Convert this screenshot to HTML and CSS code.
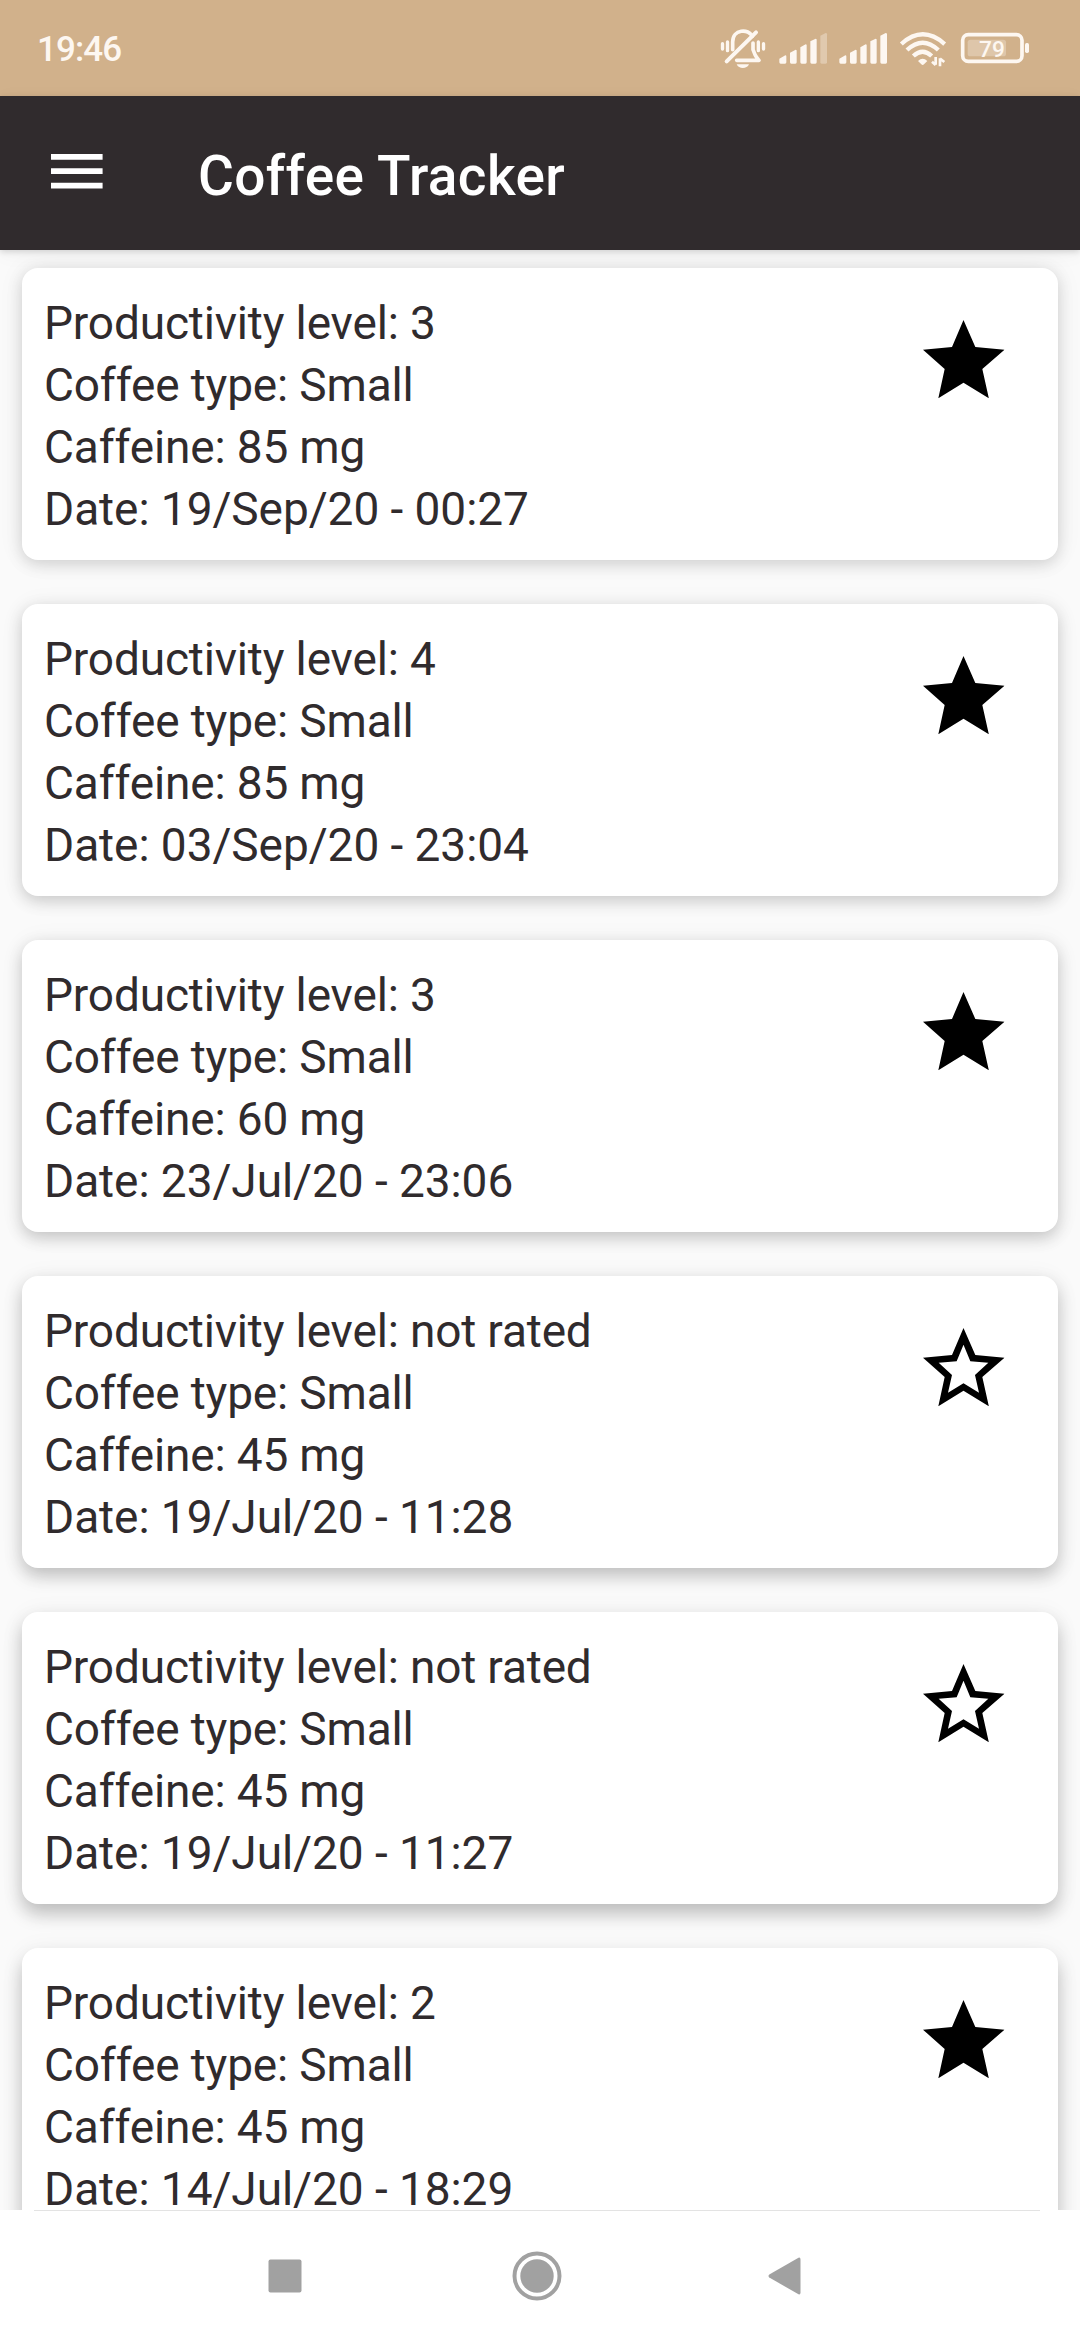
FILE: index.html
```html
<!DOCTYPE html>
<html lang="en">
<head>
<meta charset="utf-8">
<title>Coffee Tracker</title>
<link rel="stylesheet" href="styles.css">
</head>
<body>
<svg class="defs" width="0" height="0" aria-hidden="true">
  <symbol id="star-full" viewBox="0 0 245 235">
    <path d="M121.500 0L157 81L244.500 89L178 147L197.500 235L121.500 188.500L46 235L65 147L0 89L87 81Z"/>
  </symbol>
  <symbol id="star-empty" viewBox="0 0 245 235">
    <path fill-rule="evenodd" d="M121.500 0L157 81L244.500 89L178 147L197.500 235L121.500 188.500L46 235L65 147L0 89L87 81ZM121.500 50L101 100L47 104L87 141L75 194L121.500 166L168 194L156 141L196 104L142 100Z"/>
  </symbol>
</svg>
<div class="screen">
  <header class="status">
    <span class="time">19:46</span>
    <div class="status-icons">
      <svg class="bell" viewBox="60 56 140 122" fill="none" stroke="currentColor" stroke-width="10" stroke-linecap="round" stroke-linejoin="round">
        <path d="M98 118V95C98 56 146 54 157 78" stroke-width="11"/>
        <path d="M80 153L168 66" stroke-width="12"/>
        <path d="M159 98V118L165 133C167 139 173 145 177 150H110" stroke-width="11"/>
        <path d="M67.500 100V116M82.500 95V121M175 95V121M190.500 100V116"/>
        <path d="M110 162H147C141 177 116 177 110 162Z" fill="currentColor" stroke="none"/>
      </svg>
      <svg class="signal" viewBox="237 67 146 96" fill="currentColor">
        <path d="M238 147L256 137Q259 137 259 140V158Q259 162 255 162H242Q238 162 238 158ZM270 129L287 120Q290 120 290 123V158Q290 162 286 162H274Q270 162 270 158ZM301 113L317 104Q320 104 320 107V158Q320 162 316 162H305Q301 162 301 158ZM331 95L347 87Q350 87 350 90V158Q350 162 346 162H335Q331 162 331 158Z"/>
        <path opacity=".35" d="M361 78L377 70Q381 70 381 74V158Q381 162 377 162H365Q361 162 361 158Z"/>
      </svg>
      <svg class="signal" viewBox="237 67 146 96" fill="currentColor">
        <path d="M238 147L256 137Q259 137 259 140V158Q259 162 255 162H242Q238 162 238 158ZM270 129L287 120Q290 120 290 123V158Q290 162 286 162H274Q270 162 270 158ZM301 113L317 104Q320 104 320 107V158Q320 162 316 162H305Q301 162 301 158ZM331 95L347 87Q350 87 350 90V158Q350 162 346 162H335Q331 162 331 158ZM361 78L377 70Q381 70 381 74V158Q381 162 377 162H365Q361 162 361 158Z"/>
      </svg>
      <svg class="wifi" viewBox="87 62 144 110" fill="none" stroke="currentColor" stroke-width="13">
        <path d="M94 101Q158 43 224 101M111 119Q158 75 205 119M130 137Q158 111 185 137"/>
        <path d="M144 152Q158 138 172 152L162 162Q158 166 154 162Z" fill="currentColor" stroke="none"/>
        <path d="M197 140V163M186 154L197 164M210 168V144M210 145L223 155" stroke-width="8"/>
      </svg>
      <svg class="battery" viewBox="270 66 210 96">
        <rect x="278" y="74" width="178" height="80" rx="17" fill="none" stroke="currentColor" stroke-width="11"/>
        <rect x="293" y="89" width="115" height="50" rx="8" fill="currentColor" opacity=".3"/>
        <rect x="465" y="99" width="12" height="30" rx="5" fill="currentColor"/>
        <text class="charge" x="327" y="140">79</text>
      </svg>
    </div>
  </header>

  <div class="toolbar">
    <svg class="menu" viewBox="0 0 18 12" fill="currentColor"><path d="M0 0H18V2H0ZM0 5H18V7H0ZM0 10H18V12H0Z"/></svg>
    <h1 class="title">Coffee Tracker</h1>
  </div>

  <main class="list">
    <article class="card">
      <div class="details"><p>Productivity level: 3</p><p>Coffee type: Small</p><p>Caffeine: 85 mg</p><p class="date">Date: 19/Sep/20 - 00:27</p></div>
      <svg class="star"><use href="#star-full"/></svg>
    </article>
    <article class="card">
      <div class="details"><p>Productivity level: 4</p><p>Coffee type: Small</p><p>Caffeine: 85 mg</p><p class="date">Date: 03/Sep/20 - 23:04</p></div>
      <svg class="star"><use href="#star-full"/></svg>
    </article>
    <article class="card">
      <div class="details"><p>Productivity level: 3</p><p>Coffee type: Small</p><p>Caffeine: 60 mg</p><p class="date">Date: 23/Jul/20 - 23:06</p></div>
      <svg class="star"><use href="#star-full"/></svg>
    </article>
    <article class="card">
      <div class="details"><p>Productivity level: not rated</p><p>Coffee type: Small</p><p>Caffeine: 45 mg</p><p class="date">Date: 19/Jul/20 - 11:28</p></div>
      <svg class="star"><use href="#star-empty"/></svg>
    </article>
    <article class="card">
      <div class="details"><p>Productivity level: not rated</p><p>Coffee type: Small</p><p>Caffeine: 45 mg</p><p class="date">Date: 19/Jul/20 - 11:27</p></div>
      <svg class="star"><use href="#star-empty"/></svg>
    </article>
    <article class="card">
      <div class="details"><p>Productivity level: 2</p><p>Coffee type: Small</p><p>Caffeine: 45 mg</p><p class="date">Date: 14/Jul/20 - 18:29</p></div>
      <svg class="star"><use href="#star-full"/></svg>
    </article>
  </main>

  <nav class="navbar">
    <div class="divider"></div>
    <div class="keys">
      <svg class="key" viewBox="-25 -25 50 50"><rect x="-16.500" y="-16.500" width="33" height="33" rx="2"/></svg>
      <svg class="key" viewBox="-25 -25 50 50"><circle r="16.700"/><circle r="22.500" fill="none" stroke="currentColor" stroke-width="4"/></svg>
      <svg class="key" viewBox="-25 -25 50 50"><path d="M-20.700 -1.500Q-22.300 0 -20.700 1.500L8.500 18.300Q10.500 19 10.500 16.500V-16.500Q10.500 -19 8.500 -18.300Z"/></svg>
    </div>
  </nav>
</div>
</body>
</html>
```

FILE: styles.css
```css
* { box-sizing: border-box; }

body {
  margin: 0;
  font-family: Roboto, sans-serif;
  background: #fafafa;
}

.defs { display: none; }
svg { display: block; flex: none; }

.screen {
  width: 1080px;
  height: 2340px;
  display: flex;
  flex-direction: column;
  overflow: hidden;
}

.status {
  height: 96px;
  flex: none;
  display: flex;
  justify-content: space-between;
  padding: 0 50px 0 37px;
  background: #d1b18b;
  color: #fdf7f1;
}

.time {
  font-size: 35px;
  font-weight: 500;
  line-height: 41px;
  letter-spacing: -.9px;
  padding-top: 29px;
}

.status-icons { display: flex; padding-top: 28px; }
.bell { width: 46.700px; height: 40.700px; margin-right: 12.300px; margin-top: .7px; }
.signal { width: 48.700px; height: 32px; margin: 4.300px 11.300px 0 0; }
.wifi { width: 48px; height: 36.700px; margin: 2.700px 13px 0 0; }
.battery { width: 70px; height: 32px; margin-top: 4px; }
.charge {
  font-family: Roboto, sans-serif;
  font-size: 68px;
  font-weight: 500;
  fill: currentColor;
}

.toolbar {
  height: 154px;
  flex: none;
  display: flex;
  padding-left: 51.300px;
  background: #302b2d;
  color: #fff;
  position: relative;
  z-index: 1;
  box-shadow: 0 2px 6px rgba(0, 0, 0, .14), 0 4px 20px rgba(0, 0, 0, .04);
}

.menu { width: 51.600px; height: 34.400px; margin-top: 58.200px; }

.title {
  margin: 48px 0 0 95px;
  font-size: 55px;
  font-weight: 500;
  line-height: 64px;
  letter-spacing: .36px;
}

.list {
  flex: 1;
  min-height: 0;
  overflow: hidden;
  display: flex;
  flex-direction: column;
  gap: 44px;
  padding: 18px 22px 0;
}

.card {
  height: 292px;
  flex: none;
  display: flex;
  justify-content: space-between;
  padding: 24px 53px 0 22px;
  border-radius: 16px;
  background: #fff;
  box-shadow: 0 4px 16px rgba(0, 0, 0, .15), 0 0 28px rgba(0, 0, 0, .06);
}
.card:nth-child(2) { box-shadow: 0 5px 16px rgba(0, 0, 0, .17), 0 2px 26px rgba(0, 0, 0, .06); }
.card:nth-child(3) { box-shadow: 0 6px 16px rgba(0, 0, 0, .19), 0 2px 26px rgba(0, 0, 0, .06); }
.card:nth-child(4) { box-shadow: 0 8px 17px rgba(0, 0, 0, .21), 0 3px 26px rgba(0, 0, 0, .06); }
.card:nth-child(5) { box-shadow: 0 10px 18px rgba(0, 0, 0, .22), 0 3px 26px rgba(0, 0, 0, .06); }
.card:nth-child(6) { box-shadow: 0 12px 18px rgba(0, 0, 0, .22), 0 3px 26px rgba(0, 0, 0, .06); }

.details p {
  margin: 0;
  font-size: 46px;
  line-height: 62px;
  letter-spacing: -.16px;
  color: #302b2d;
}
.details .date { letter-spacing: -.06px; }

.star { width: 81.670px; height: 78.330px; margin-top: 28.300px; }

.navbar { height: 130px; flex: none; background: #fff; }
.divider { height: 1px; margin: 0 40px 0 34px; background: #e3e3e3; }
.keys {
  display: flex;
  gap: 202.500px;
  padding: 39.500px 0 0 259.800px;
  color: #a1a1a1;
  fill: currentColor;
}
.key { width: 50px; height: 50px; }
```
